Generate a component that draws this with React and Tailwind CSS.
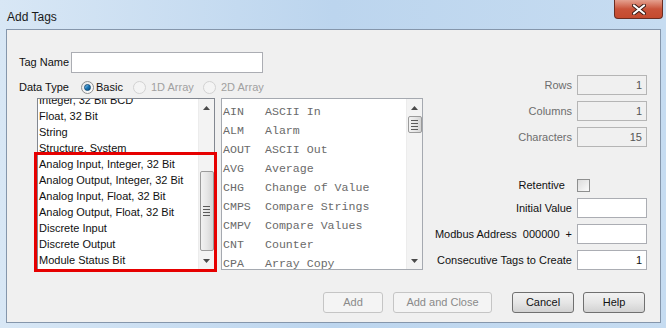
import React from 'react';

const leftItems = [
  'Integer, 32 Bit BCD',
  'Float, 32 Bit',
  'String',
  'Structure, System',
  'Analog Input, Integer, 32 Bit',
  'Analog Output, Integer, 32 Bit',
  'Analog Input, Float, 32 Bit',
  'Analog Output, Float, 32 Bit',
  'Discrete Input',
  'Discrete Output',
  'Module Status Bit',
];

const instructions = [
  ['AIN', 'ASCII In'],
  ['ALM', 'Alarm'],
  ['AOUT', 'ASCII Out'],
  ['AVG', 'Average'],
  ['CHG', 'Change of Value'],
  ['CMPS', 'Compare Strings'],
  ['CMPV', 'Compare Values'],
  ['CNT', 'Counter'],
  ['CPA', 'Array Copy'],
];

const Arrow = ({ down }) => (
  <svg width="7" height="4" viewBox="0 0 7 4">
    {down ? <path d="M0 0h7L3.5 4z" fill="#4a4a4a" /> : <path d="M0 4h7L3.5 0z" fill="#4a4a4a" />}
  </svg>
);

const Scrollbar = ({ thumbTop, thumbHeight }) => (
  <div className="w-[16px] flex flex-col bg-[#f3f3f3] border-l border-[#ececec]">
    <div className="h-[17px] flex items-center justify-center">
      <Arrow />
    </div>
    <div className="flex-1 flex flex-col items-center">
      <div
        className="w-[14px] rounded-[2px] border border-[#9b9b9b] bg-gradient-to-r from-[#f2f2f2] via-[#e6e6e6] to-[#d4d4d4] flex flex-col items-center justify-center gap-[2px]"
        style={{ marginTop: thumbTop, height: thumbHeight }}
      >
        <div className="w-[7px] h-[1px] bg-[#5a5a5a]" />
        <div className="w-[7px] h-[1px] bg-[#5a5a5a]" />
        <div className="w-[7px] h-[1px] bg-[#5a5a5a]" />
        <div className="w-[7px] h-[1px] bg-[#5a5a5a]" />
      </div>
    </div>
    <div className="h-[17px] flex items-center justify-center">
      <Arrow down />
    </div>
  </div>
);

const Radio = ({ checked, disabled }) => (
  <div
    className={`w-[13px] h-[13px] rounded-full border flex items-center justify-center ${
      disabled ? 'border-[#d2d2d2] bg-[#f4f4f4]' : 'border-[#8e8f8f] bg-gradient-to-br from-[#e6e6e6] to-[#ffffff]'
    }`}
  >
    {checked && (
      <div className="w-[7px] h-[7px] rounded-full bg-gradient-to-br from-[#8cd0f5] via-[#1b78b8] to-[#0d4f82] border border-[#0f4a78]" />
    )}
  </div>
);

const TextBox = ({ value, disabled, w = 'w-[70px]' }) => (
  <div
    className={`${w} h-[20px] border flex items-center justify-end pr-[4px] ${
      disabled ? 'bg-[#f0f0f0] border-[#b5b5b5] text-[#555]' : 'bg-white border-[#abadb3] text-[#111]'
    }`}
  >
    {value}
  </div>
);

const Button = ({ children, disabled, w }) => (
  <div
    className={`${w} h-[21px] rounded-[3px] border flex items-center justify-center ${
      disabled
        ? 'border-[#c5c5c5] bg-[#f4f4f4] text-[#8a8a8a]'
        : 'border-[#707070] bg-gradient-to-b from-[#f2f2f2] via-[#e6e6e6] to-[#d2d2d2] text-[#111]'
    }`}
  >
    {children}
  </div>
);

export default function App() {
  return (
    <div className="w-[666px] h-[328px] flex flex-col pl-[6px] pr-[5px] bg-gradient-to-r from-[#d8e7f5] via-[#bcd5ee] to-[#c6dcf1] font-['Liberation_Sans',Arial,sans-serif] text-[11px] text-[#111] overflow-hidden">
      {/* title bar */}
      <div className="h-[29px] flex items-start justify-between">
        <div className="pt-[8px] pl-[1px] text-[12px] text-[#1a1a1a]">Add Tags</div>
        <div className="w-[49px] h-[19px] mr-[-2px] rounded-b-[4px] border border-t-0 border-[#6b2d22] bg-gradient-to-b from-[#e4a08f] via-[#c9533a] to-[#c44a2f] flex items-center justify-center">
          <svg width="14" height="11" viewBox="0 0 14 11">
            <path d="M2 1.5l10 8M12 1.5l-10 8" stroke="#3a1a14" strokeWidth="4" strokeLinecap="round" />
            <path d="M2 1.5l10 8M12 1.5l-10 8" stroke="#ffffff" strokeWidth="2.2" strokeLinecap="round" />
          </svg>
        </div>
      </div>

      {/* client area */}
      <div className="h-[294px] border border-[#8596ab] bg-[#f0f0f0] flex flex-col">
        <div className="h-[240px] flex">
          {/* left part */}
          <div className="w-[416px] pl-[12px] flex flex-col">
            <div className="mt-[22px] h-[21px] flex items-center">
              <span className="w-[52px]">Tag Name</span>
              <div className="w-[192px] h-[21px] bg-white border border-[#abadb3]" />
            </div>
            <div className="mt-[5px] h-[18px] flex items-center">
              <span className="w-[62px]">Data Type</span>
              <div className="w-[52px] flex items-center">
                <Radio checked />
                <span className="ml-[2px]">Basic</span>
              </div>
              <div className="w-[70px] flex items-center">
                <Radio disabled />
                <span className="ml-[5px] text-[#a0a0a0]">1D Array</span>
              </div>
              <div className="flex items-center">
                <Radio disabled />
                <span className="ml-[5px] text-[#a0a0a0]">2D Array</span>
              </div>
            </div>
            <div className="mt-[2px] ml-[18px] flex gap-[6px]">
              {/* data type list */}
              <div className="relative w-[178px] h-[172px] border border-[#828790] bg-white flex">
                <div className="flex-1 overflow-hidden pl-[1px]">
                  <div className="mt-[-7px]">
                    {leftItems.map((t) => (
                      <div key={t} className="h-[16px] leading-[16px] whitespace-nowrap">
                        {t}
                      </div>
                    ))}
                  </div>
                </div>
                <Scrollbar thumbTop={55} thumbHeight={80} />
                <div className="absolute left-[-4px] top-[53px] w-[183px] h-[120px] border-[3px] border-[#e60000]" />
              </div>
              {/* instruction list */}
              <div className="w-[202px] h-[172px] border border-[#a5a9b0] bg-white flex">
                <div className="flex-1 overflow-hidden pl-[1px] pt-[3px] font-['Liberation_Mono',monospace] text-[11.6px] text-[#6a6a6a]">
                  {instructions.map(([a, b]) => (
                    <div key={a} className="h-[19px] leading-[19px] flex whitespace-pre">
                      <span className="w-[42px]">{a}</span>
                      <span>{b}</span>
                    </div>
                  ))}
                </div>
                <Scrollbar thumbTop={0} thumbHeight={17} />
              </div>
            </div>
          </div>

          {/* right part */}
          <div className="flex-1 flex flex-col items-end pr-[13px]">
            <div className="mt-[45px] flex items-center gap-[5px]">
              <span className="text-[#6d6d6d]">Rows</span>
              <TextBox value="1" disabled />
            </div>
            <div className="mt-[6px] flex items-center gap-[5px]">
              <span className="text-[#6d6d6d]">Columns</span>
              <TextBox value="1" disabled />
            </div>
            <div className="mt-[6px] flex items-center gap-[5px]">
              <span className="text-[#6d6d6d]">Characters</span>
              <TextBox value="15" disabled />
            </div>
            <div className="mt-[28px] h-[20px] flex items-center gap-[12px]">
              <span>Retentive</span>
              <div className="w-[70px] flex">
                <div className="w-[13px] h-[13px] border border-[#8e8f8f] bg-gradient-to-br from-[#dcdcdc] to-[#fbfbfb]" />
              </div>
            </div>
            <div className="mt-[3px] flex items-center gap-[5px]">
              <span>Initial Value</span>
              <TextBox value="" />
            </div>
            <div className="mt-[6px] flex items-center gap-[5px]">
              <span>Modbus Address</span>
              <span className="ml-[1px]">000000</span>
              <span className="ml-[1px]">+</span>
              <TextBox value="" />
            </div>
            <div className="mt-[6px] flex items-center gap-[5px]">
              <span>Consecutive Tags to Create</span>
              <TextBox value="1" />
            </div>
          </div>
        </div>

        {/* buttons */}
        <div className="mt-[22px] pr-[15px] flex justify-end">
          <Button disabled w="w-[60px]">Add</Button>
          <div className="ml-[10px]">
            <Button disabled w="w-[99px]">Add and Close</Button>
          </div>
          <div className="ml-[20px]">
            <Button w="w-[62px]">Cancel</Button>
          </div>
          <div className="ml-[9px]">
            <Button w="w-[62px]">Help</Button>
          </div>
        </div>
      </div>
    </div>
  );
}
